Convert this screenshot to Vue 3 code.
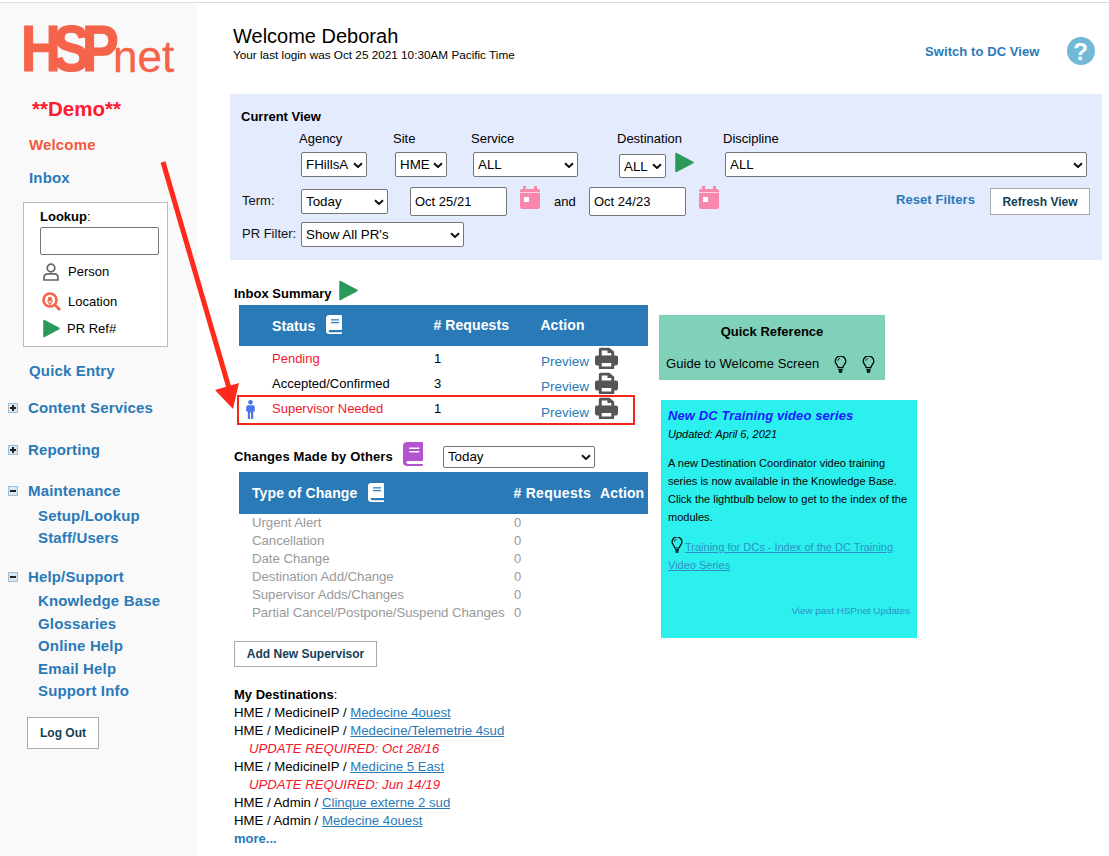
<script setup>
const destinations = [
  { pre: 'HME / MedicineIP / ', link: 'Medecine 4ouest' },
  { pre: 'HME / MedicineIP / ', link: 'Medecine/Telemetrie 4sud', warn: 'UPDATE REQUIRED: Oct 28/16' },
  { pre: 'HME / MedicineIP / ', link: 'Medicine 5 East', warn: 'UPDATE REQUIRED: Jun 14/19' },
  { pre: 'HME / Admin / ', link: 'Clinque externe 2 sud' },
  { pre: 'HME / Admin / ', link: 'Medecine 4ouest' }
]
const changes = ['Urgent Alert', 'Cancellation', 'Date Change', 'Destination Add/Change', 'Supervisor Adds/Changes', 'Partial Cancel/Postpone/Suspend Changes']
const inbox = [
  { label: 'Pending', n: 1, red: true },
  { label: 'Accepted/Confirmed', n: 3 },
  { label: 'Supervisor Needed', n: 1, red: true, person: true }
]
const chevron = 'M1 1.2 5 5 9 1.2'
const printer = 'M6 1h9l5 4.5V10h2a2 2 0 0 1 2 2v7a3 3 0 0 1-3 3h-1v3a1 1 0 0 1-1 1H5a1 1 0 0 1-1-1v-3H3a3 3 0 0 1-3-3v-7a2 2 0 0 1 2-2h2V3a2 2 0 0 1 2-2Zm1 3v6h10V7h-4V4Zm0 15v4h10v-4Z'
const book = 'M3.5 0H15a1 1 0 0 1 1 1v15.5a1 1 0 0 1-1 1H4a1.3 1.3 0 0 0 0 2.6h12V21a1 1 0 0 1-1 1H3.5A3.5 3.5 0 0 1 0 18.5v-15A3.5 3.5 0 0 1 3.5 0ZM5 5v1.4h8V5Zm0 3.2v1.4h8V8.200Z'
</script>

<template>
  <div class="page">
    <aside class="side">
      <div class="logo"><span class="hsp">HSP</span><span class="net">net</span></div>
      <div class="demo">**Demo**</div>
      <a class="nav nav-top active">Welcome</a>
      <a class="nav nav-inbox">Inbox</a>
      <div class="lookup">
        <div class="lookup-title"><b>Lookup</b>:</div>
        <input class="lookup-input" type="text" />
        <div class="lk-row lk-person">
          <svg width="16" height="18" viewBox="0 0 16 18" fill="none" stroke="#666" stroke-width="1.7"><circle cx="8" cy="5" r="3.8"/><path d="M1 17v-2.500C1 12 3 10.800 5 10.800h6c2 0 4 1.200 4 3.700V17Z"/></svg>
          <span>Person</span>
        </div>
        <div class="lk-row lk-location">
          <svg width="20" height="19" viewBox="0 0 20 19" fill="none" stroke="#f4634a"><circle cx="8" cy="8" r="6.500" stroke-width="2.600"/><circle cx="8" cy="7" r="2.200" fill="#f4634a" stroke="none"/><path d="M5.500 8.500 8 12.500l2.500-4" stroke-width="1.200"/><path d="m13 13 5 5" stroke-width="2.800"/></svg>
          <span>Location</span>
        </div>
        <div class="lk-row lk-ref">
          <svg width="17" height="19" viewBox="0 0 17 19"><path d="M1 1.500v16L16 9.500Z" fill="#2a9a5a" stroke="#2a9a5a" stroke-width="1.500" stroke-linejoin="round"/></svg>
          <span>PR Ref#</span>
        </div>
      </div>
      <a class="nav nav-quick">Quick Entry</a>
      <div class="group g-content"><span class="box"><i class="h"></i><i class="v"></i></span><a class="nav">Content Services</a></div>
      <div class="group g-report"><span class="box"><i class="h"></i><i class="v"></i></span><a class="nav">Reporting</a></div>
      <div class="group g-maint"><span class="box"><i class="h"></i></span><a class="nav">Maintenance</a></div>
      <div class="subs s-maint"><a class="nav">Setup/Lookup</a><a class="nav">Staff/Users</a></div>
      <div class="group g-help"><span class="box"><i class="h"></i></span><a class="nav">Help/Support</a></div>
      <div class="subs s-help"><a class="nav">Knowledge Base</a><a class="nav">Glossaries</a><a class="nav">Online Help</a><a class="nav">Email Help</a><a class="nav">Support Info</a></div>
      <button class="btn logout">Log Out</button>
    </aside>

    <main class="main">
      <header class="head">
        <div class="greet">
          <h1>Welcome Deborah</h1>
          <p>Your last login was Oct 25 2021 10:30AM Pacific Time</p>
        </div>
        <a class="switch">Switch to DC View</a>
        <span class="help">?</span>
      </header>

      <section class="filters">
        <div class="cv"><b>Current View</b></div>
        <div class="f-row1">
          <div class="col c-agency"><label>Agency</label><span class="sel w66"><select><option>FHillsA</option></select><svg width="10" height="6" viewBox="0 0 10 6"><path :d="chevron"/></svg></span></div>
          <div class="col c-site"><label>Site</label><span class="sel w52"><select><option>HME</option></select><svg width="10" height="6" viewBox="0 0 10 6"><path :d="chevron"/></svg></span></div>
          <div class="col c-service"><label>Service</label><span class="sel w105"><select><option>ALL</option></select><svg width="10" height="6" viewBox="0 0 10 6"><path :d="chevron"/></svg></span></div>
          <div class="col c-dest"><label>Destination</label>
            <div class="dest-line">
              <span class="sel w47"><select><option>ALL</option></select><svg width="10" height="6" viewBox="0 0 10 6"><path :d="chevron"/></svg></span>
              <svg class="dest-play" width="19" height="21" viewBox="0 0 19 21"><path d="M1 1.500v18L18 10.500Z" fill="#2a9a5a" stroke="#2a9a5a" stroke-width="1.500" stroke-linejoin="round"/></svg>
            </div>
          </div>
          <div class="col c-disc"><label>Discipline</label><span class="sel w362"><select><option>ALL</option></select><svg width="10" height="6" viewBox="0 0 10 6"><path :d="chevron"/></svg></span></div>
        </div>
        <div class="f-row2">
          <span class="f-label term-label">Term:</span>
          <span class="sel w87"><select><option>Today</option></select><svg width="10" height="6" viewBox="0 0 10 6"><path :d="chevron"/></svg></span>
          <input class="date d1" value="Oct 25/21" />
          <svg class="cal" width="20" height="23" viewBox="0 0 20 23"><path fill="#f888ab" d="M3 0h3v3h8V0h3v3h1a2 2 0 0 1 2 2v16a2 2 0 0 1-2 2H2a2 2 0 0 1-2-2V5a2 2 0 0 1 2-2h1Z"/><path d="M0 6.500h20" stroke="#fbd3df" stroke-width="1"/><rect x="4" y="11" width="5" height="5" fill="#fff"/></svg>
          <span class="and">and</span>
          <input class="date" value="Oct 24/23" />
          <svg class="cal" width="20" height="23" viewBox="0 0 20 23"><path fill="#f888ab" d="M3 0h3v3h8V0h3v3h1a2 2 0 0 1 2 2v16a2 2 0 0 1-2 2H2a2 2 0 0 1-2-2V5a2 2 0 0 1 2-2h1Z"/><path d="M0 6.500h20" stroke="#fbd3df" stroke-width="1"/><rect x="4" y="11" width="5" height="5" fill="#fff"/></svg>
          <a class="reset">Reset Filters</a>
          <button class="btn refresh">Refresh View</button>
        </div>
        <div class="f-row3">
          <span class="f-label pr-label">PR Filter:</span>
          <span class="sel w163"><select><option>Show All PR's</option></select><svg width="10" height="6" viewBox="0 0 10 6"><path :d="chevron"/></svg></span>
        </div>
      </section>

      <div class="content">
        <div class="left">
          <div class="inbox-title">
            <b>Inbox Summary</b>
            <svg width="19" height="21" viewBox="0 0 19 21"><path d="M1 1.500v18L18 10.500Z" fill="#2a9a5a" stroke="#2a9a5a" stroke-width="1.500" stroke-linejoin="round"/></svg>
          </div>
          <div class="t-head t1">
            <span class="th-status">Status</span>
            <svg class="bk" width="16" height="19" viewBox="0 0 16 22" preserveAspectRatio="none"><path fill="#fff" :d="book"/></svg>
            <span class="th-req"># Requests</span>
            <span class="th-act">Action</span>
          </div>
          <div v-for="(r, i) in inbox" :key="r.label" class="t-row" :class="{ last: i === 2 }">
            <span class="person">
              <svg v-if="r.person" width="9" height="19" viewBox="0 0 9 19" fill="#4a74e8"><circle cx="4.500" cy="2.300" r="2.300"/><path d="M2 5.200h5a1.800 1.800 0 0 1 1.800 1.800v4.500H7.200V19H5V12.500H4V19H1.800v-7.500H.2V7A1.800 1.800 0 0 1 2 5.200Z"/></svg>
            </span>
            <span class="st" :class="{ red: r.red }">{{ r.label }}</span>
            <span class="n">{{ r.n }}</span>
            <a class="preview">Preview</a>
            <svg class="print" width="23" height="22" viewBox="0 0 24 26" preserveAspectRatio="none"><path fill="#555" fill-rule="evenodd" :d="printer"/></svg>
          </div>

          <div class="ch-title">
            <b class="ch-label">Changes Made by Others</b>
            <svg class="bk2" width="20" height="24" viewBox="0 0 16 22" preserveAspectRatio="none"><path fill="#b452cf" :d="book"/></svg>
            <span class="sel w152"><select><option>Today</option></select><svg width="10" height="6" viewBox="0 0 10 6"><path :d="chevron"/></svg></span>
          </div>
          <div class="t-head t2">
            <span class="th-type">Type of Change</span>
            <svg class="bk" width="16" height="19" viewBox="0 0 16 22" preserveAspectRatio="none"><path fill="#fff" :d="book"/></svg>
            <span class="th-req2"># Requests</span>
            <span class="th-act2">Action</span>
          </div>
          <div class="ch-rows">
            <div v-for="c in changes" :key="c" class="ch-row"><span>{{ c }}</span><span>0</span></div>
          </div>

          <button class="btn add">Add New Supervisor</button>

          <div class="dest-list">
            <div><b>My Destinations</b>:</div>
            <template v-for="d in destinations" :key="d.link + d.pre">
              <div>{{ d.pre }}<a class="ul">{{ d.link }}</a></div>
              <div v-if="d.warn" class="warn">{{ d.warn }}</div>
            </template>
            <a class="more">more...</a>
          </div>
        </div>

        <div class="right">
          <div class="quick">
            <div class="q-title"><b>Quick Reference</b></div>
            <div class="q-row">
              <span class="q-guide">Guide to Welcome Screen</span>
              <svg width="13" height="17" viewBox="0 0 12 16" fill="none" stroke="#000" stroke-width="1.200"><path d="M3.800 11C3.500 8.500 1 7.500 1 5a5 5 0 0 1 10 0c0 2.500-2.500 3.500-2.800 6Z"/><path d="M3.500 4.500C3.500 3.200 4.500 2.500 5.500 2.300" stroke-width=".9"/><path d="M4 13h4M4.500 15h3" stroke-width="1.700"/></svg>
              <svg width="13" height="17" viewBox="0 0 12 16" fill="none" stroke="#000" stroke-width="1.200"><path d="M3.800 11C3.500 8.500 1 7.500 1 5a5 5 0 0 1 10 0c0 2.500-2.500 3.500-2.800 6Z"/><path d="M3.500 4.500C3.500 3.200 4.500 2.500 5.500 2.300" stroke-width=".9"/><path d="M4 13h4M4.500 15h3" stroke-width="1.700"/></svg>
            </div>
          </div>
          <div class="news">
            <div class="n-title">New DC Training video series</div>
            <div class="n-date">Updated: April 6, 2021</div>
            <p class="n-body">A new Destination Coordinator video training series is now available in the Knowledge Base. Click the lightbulb below to get to the index of the modules.</p>
            <p class="n-link">
              <svg width="12" height="16" viewBox="0 0 12 16" fill="none" stroke="#000" stroke-width="1.200"><path d="M3.800 11C3.500 8.500 1 7.500 1 5a5 5 0 0 1 10 0c0 2.500-2.500 3.500-2.800 6Z"/><path d="M3.500 4.500C3.500 3.200 4.500 2.500 5.500 2.300" stroke-width=".9"/><path d="M4 13h4M4.500 15h3" stroke-width="1.700"/></svg>
              <a class="ul">Training for DCs - Index of the DC Training Video Series</a>
            </p>
            <div class="n-past">View past HSPnet Updates</div>
          </div>
        </div>
      </div>
    </main>

    <svg class="overlay" width="1109" height="856" viewBox="0 0 1109 856">
      <path d="M163 162 229 388" stroke="#ff2a1c" stroke-width="5" fill="none"/>
      <path d="M233 409 215 390 239 383Z" fill="#ff2a1c"/>
      <rect x="238" y="396" width="396" height="28" fill="none" stroke="#f5261b" stroke-width="2"/>
    </svg>
  </div>
</template>

<style>
html, body { margin: 0; background: #fff; }
</style>

<style scoped>
.page { position: relative; display: flex; width: 1109px; height: 856px; overflow: hidden; background: #fff; font: 13px/18px "Liberation Sans", Arial, sans-serif; color: #000; }
.page::before { content: ""; position: absolute; left: 0; right: 0; top: 2px; height: 1px; background: #ddd; }
a { color: #2a7ab8; }
b { font-weight: 700; }

.side { width: 197px; flex: none; margin-top: 3px; background: #f9f9f9; box-sizing: border-box; padding-left: 29px; }
.logo { margin: 15px 0 0 -8px; height: 62px; white-space: nowrap; color: #f4634a; line-height: 62px; }
.hsp { display: inline-block; width: 92px; font-size: 64px; font-weight: 700; letter-spacing: -9px; transform: scaleX(.86); transform-origin: 0 50%; -webkit-text-stroke: 1.2px #f4634a; }
.net { font-size: 44px; letter-spacing: 0; vertical-align: -1px; -webkit-text-stroke: .3px #f4634a; }
.demo { margin: 17px 0 0 3px; font-size: 20.500px; line-height: 24px; font-weight: 700; color: #ff1a2e; }
.nav { display: block; font-size: 15px; line-height: 20px; font-weight: 700; letter-spacing: .15px; color: #2a7ab8; white-space: nowrap; }
.nav-top { margin-top: 14px; }
.active { color: #f4583f; }
.nav-inbox { margin-top: 13px; }
.lookup { margin: 14px 0 0 -6px; width: 145px; height: 145px; box-sizing: border-box; border: 1px solid #bbb; background: #fff; padding: 6px 0 0 16px; }
.lookup-title { line-height: 16px; }
.lookup-input { display: block; width: 119px; height: 28px; margin-top: 2px; box-sizing: border-box; border: 1px solid #767676; border-radius: 2px; background: #fff; padding: 0; }
.lk-row { display: flex; align-items: center; }
.lk-row svg { flex: none; }
.lk-person { margin: 8px 0 0 3px; gap: 9px; }
.lk-location { margin: 11px 0 0 2px; gap: 6px; }
.lk-ref { margin: 8px 0 0 3px; gap: 7px; }
.nav-quick { margin-top: 14px; }
.group { display: flex; align-items: center; margin-left: -21px; }
.group .box { margin-right: 10px; }
.box { position: relative; flex: none; width: 8px; height: 8px; border: 1px solid #9dbcd6; background: #dce6ee; }
.box .h { position: absolute; left: 1px; right: 1px; top: 3px; height: 2px; background: #222; }
.box .v { position: absolute; top: 1px; bottom: 1px; left: 3px; width: 2px; background: #222; }
.g-content { margin-top: 17px; }
.g-report { margin-top: 22px; }
.g-maint { margin-top: 21px; }
.subs { margin-left: 9px; }
.s-maint { margin-top: 5px; }
.s-maint .nav + .nav { margin-top: 2px; }
.g-help { margin-top: 19px; }
.s-help { margin-top: 4px; }
.s-help .nav + .nav { margin-top: 2.500px; }
.btn { display: block; box-sizing: border-box; padding: 0; border: 1px solid #aaa; background: #fff; font: 700 12px "Liberation Sans", Arial, sans-serif; color: #143f55; text-align: center; }
.logout { margin: 16px 0 0 -2px; width: 72px; height: 32px; }

.main { flex: 1; padding: 3px 7px 0 33px; min-width: 0; }
.head { display: flex; align-items: flex-start; height: 91px; }
.greet { width: 692px; flex: none; margin-left: 3px; padding-top: 21px; }
h1 { margin: 0; font-size: 20px; line-height: 24px; font-weight: 400; }
p { margin: 0; }
.greet p { font-size: 11.750px; line-height: 14px; }
.switch { margin-top: 40px; font-size: 13px; line-height: 18px; font-weight: 700; letter-spacing: .08px; white-space: nowrap; }
.help { flex: none; width: 28px; height: 28px; margin: 34px 0 0 27px; border-radius: 50%; background: #72b9d5; color: #fff; font-size: 24px; font-weight: 700; line-height: 29px; text-align: center; }

.filters { height: 166px; box-sizing: border-box; background: #e4ebfd; padding: 15px 12px 0 11px; }
.cv { line-height: 16px; }
.f-row1 { display: flex; margin: 6px 0 0 58px; }
.col label { display: block; line-height: 16px; height: 21px; white-space: nowrap; }
.c-agency { width: 94px; }
.c-site { width: 78px; }
.c-service { width: 146px; }
.c-dest { width: 106px; }
.col .sel { margin-left: 2px; }
.dest-line { display: flex; align-items: flex-start; }
.dest-line .sel { margin-top: 2px; height: 24px; }
.dest-play { margin-left: 9px; }
.sel { position: relative; display: block; flex: none; height: 25px; }
.sel select { display: block; width: 100%; height: 100%; box-sizing: border-box; appearance: none; border: 1px solid #767676; border-radius: 2px; background: #fff; font: 13.330px "Liberation Sans", Arial, sans-serif; color: #000; padding: 0 4px; }
.sel svg { position: absolute; right: 4px; top: 50%; margin-top: -3px; fill: none; stroke: #111; stroke-width: 2; pointer-events: none; }
.w66 { width: 66px; } .w52 { width: 52px; } .w105 { width: 105px; } .w47 { width: 47px; } .w362 { width: 362px; } .w87 { width: 87px; } .w163 { width: 163px; } .w152 { width: 152px; }
.f-row2 { display: flex; align-items: center; height: 29px; margin-top: 9px; }
.f-label { flex: none; white-space: nowrap; color: #111; margin-top: -2px; }
.term-label { width: 60px; padding-left: 1px; box-sizing: border-box; }
.date { flex: none; width: 97px; height: 29px; box-sizing: border-box; margin-left: 22px; border: 1px solid #767676; border-radius: 2px; background: #fff; font: 13px "Liberation Sans", Arial, sans-serif; padding: 0 4px; color: #000; }
.cal { flex: none; margin: -9px 0 0 13px; }
.and { margin-left: 14px; width: 35px; font-size: 13px; flex: none; }
.and + .date { margin-left: 0; }
.reset { margin-left: auto; margin-top: -3px; font-weight: 700; white-space: nowrap; letter-spacing: .08px; }
.refresh { margin-left: 15px; width: 100px; height: 27px; flex: none; }
.f-row3 { display: flex; align-items: center; margin-top: 6px; }
.pr-label { width: 60px; padding-left: 1px; box-sizing: border-box; }

.content { display: flex; }
.left { width: 429px; flex: none; padding-left: 4px; box-sizing: border-box; }
.inbox-title { display: flex; align-items: flex-end; gap: 7px; height: 41px; line-height: 18px; }
.inbox-title b { margin-bottom: -2px; }
.t-head { display: flex; align-items: center; margin-left: 5px; width: 409px; background: #2a7ab8; color: #fff; font-weight: 700; font-size: 14px; letter-spacing: .1px; white-space: nowrap; }
.t1 { height: 41px; margin-top: 4px; }
.t2 { height: 42px; margin-top: 2px; }
.th-status { margin-left: 33px; }
.bk { flex: none; margin-left: 11px; margin-top: -2px; }
.th-req { flex: none; width: 107px; margin-left: 91px; margin-top: -2px; }
.th-act { flex: none; margin-top: -2px; }
.t-row { display: flex; align-items: center; margin-left: 5px; height: 25px; width: 409px; }
.person { flex: none; width: 33px; padding-left: 7px; box-sizing: border-box; height: 19px; margin-top: 2px; }
.st { width: 162px; flex: none; color: #000; }
.red { color: #f5162d; }
.n { width: 107px; flex: none; }
.preview { margin-top: 7px; font-size: 13.500px; }
.print { flex: none; margin: -1px 0 0 6px; }
.last .preview { margin-top: 9px; }
.ch-title { display: flex; align-items: center; height: 28px; margin-top: 21px; }
.ch-label { letter-spacing: .13px; margin-top: 2px; }
.bk2 { flex: none; margin-left: 10px; margin-top: -4px; }
.ch-title .sel { height: 22px; margin-left: 20px; margin-top: 1px; }
.th-type { margin-left: 13px; }
.th-req2 { margin-left: 129px; letter-spacing: .3px; }
.th-act2 { margin-left: 9px; }
.ch-rows { margin: 0 0 0 18px; color: #9a9a9a; }
.ch-row { display: flex; height: 18px; line-height: 18px; }
.ch-row span:first-child { width: 262px; white-space: nowrap; flex: none; font-size: 13.300px; letter-spacing: -.08px; }
.add { width: 143px; height: 26px; margin-top: 19px; }
.dest-list { margin-top: 19px; font-size: 13px; }
.dest-list > div { height: 18px; white-space: nowrap; font-size: 13.200px; }
.dest-list > div:first-child { font-size: 13px; }
.ul { text-decoration: underline; }
.warn { padding-left: 15px; color: #f5162d; font-style: italic; }
.more { display: block; font-weight: 700; line-height: 18px; font-size: 13px; }

.right { flex: none; width: 258px; margin-top: 55px; }
.quick { width: 226px; height: 65px; background: #7fd1b9; box-sizing: border-box; padding-top: 8px; }
.q-title { text-align: center; line-height: 18px; }
.q-row { display: flex; align-items: center; margin: 14px 0 0 7px; }
.q-guide { letter-spacing: .08px; white-space: nowrap; }
.q-row svg { flex: none; margin-left: 15px; }
.news { margin: 20px 0 0 2px; width: 256px; height: 238px; box-sizing: border-box; background: #2cf0ee; padding: 8px 7px 0; font-size: 11px; position: relative; }
.n-title { font-size: 13px; font-weight: 700; font-style: italic; color: #1a1aff; line-height: 16px; letter-spacing: .1px; }
.n-date { font-style: italic; line-height: 18px; margin-top: 1px; }
.n-body { margin-top: 11px; line-height: 18px; }
.n-link { margin-top: 11px; line-height: 18px; }
.n-link svg { vertical-align: -2px; margin: 0 2px 0 3px; }
.n-link .ul { color: #2f90c6; }
.n-past { margin-top: 30px; text-align: right; font-size: 9.850px; color: #2f90c6; line-height: 14px; }

.overlay { position: absolute; left: 0; top: 0; pointer-events: none; }
</style>
